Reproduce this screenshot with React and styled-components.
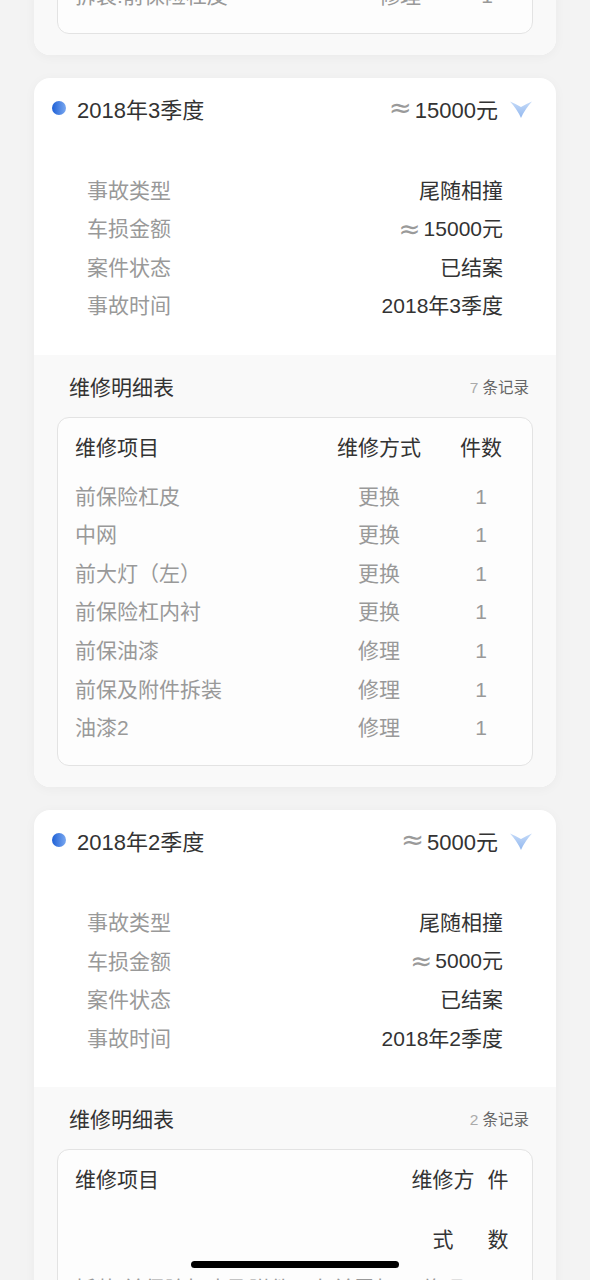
import React from "react";
import styled, { createGlobalStyle } from "styled-components";

const GlobalStyle = createGlobalStyle`
  body {
    margin: 0;
    background: #f3f3f3;
    font-family: "Liberation Sans", "Noto Sans CJK SC", sans-serif;
    color: #333;
  }
`;

const Page = styled.main`
  display: flex;
  flex-direction: column;
  gap: 23px;
  padding: 0 34px 40px;
  margin-top: -24px;
`;

const Card = styled.section`
  background: #fff;
  border-radius: 16px;
  overflow: hidden;
  box-shadow: 0 2px 12px rgba(0, 0, 0, 0.04);
`;

const CardHeader = styled.div`
  display: flex;
  align-items: center;
  height: 32px;
  padding: 14px 24px 0 18px;
`;

const Dot = styled.span`
  width: 14px;
  height: 14px;
  border-radius: 50%;
  background: linear-gradient(90deg, #1e60d6, #7aa8f0);
  flex-shrink: 0;
`;

const Title = styled.h2`
  margin: 0 0 0 11px;
  font-size: 22px;
  font-weight: 400;
  color: #333;
`;

const Amount = styled.div`
  margin-left: auto;
  font-size: 22px;
  color: #333;
  display: flex;
  align-items: center;
`;

const Approx = styled.span`
  font-family: "DejaVu Sans", sans-serif;
  font-size: 1.25em;
  line-height: 1;
  color: #9a9a9a;
  margin-right: 3px;
  vertical-align: -2px;
`;

const Chevron = styled.svg`
  width: 22px;
  height: 18px;
  margin-left: 12px;
  margin-top: 2px;
`;

const InfoList = styled.dl`
  margin: 0;
  padding: 46px 53px 31px;
`;

const InfoRow = styled.div`
  display: flex;
  justify-content: space-between;
  align-items: center;
  height: 38.5px;
  font-size: 21px;

  dt {
    color: #999;
  }

  dd {
    margin: 0;
    color: #333;
  }
`;

const RepairSection = styled.div`
  background: #f9f9f9;
  padding: ${({ continued }) => (continued ? "0 23px 21px" : "17px 23px 21px")};
`;

const SectionHead = styled.div`
  display: flex;
  justify-content: space-between;
  align-items: center;
  height: 28px;
  padding: 0 4px 0 12px;
  margin-bottom: 17px;
`;

const SectionTitle = styled.h3`
  margin: 0;
  font-size: 21px;
  font-weight: 400;
  color: #333;
`;

const Records = styled.span`
  font-size: 15.5px;
  color: #666;

  b {
    font-weight: 400;
    color: #aaa;
    margin-right: 4px;
  }
`;

const TableBox = styled.div`
  background: #fdfdfd;
  border: 1px solid #e3e3e3;
  border-radius: 12px;
  padding: 0 19px 17px 17px;
`;

const TRow = styled.div`
  display: grid;
  grid-template-columns: ${({ cols }) => cols};
  column-gap: 8px;
  font-size: 21px;
  line-height: ${({ head }) => (head ? "60px" : "38.6px")};
  color: ${({ head }) => (head ? "#333" : "#999")};

  span:not(:first-child) {
    text-align: center;
  }
`;

const HomeIndicator = styled.div`
  position: fixed;
  left: 50%;
  bottom: 12px;
  width: 208px;
  height: 7px;
  margin-left: -104px;
  border-radius: 4px;
  background: #000;
`;

const ChevronIcon = () => (
  <Chevron viewBox="0 0 22 18">
    <defs>
      <linearGradient id="chev" x1="0" y1="0" x2="0" y2="1">
        <stop offset="0" stopColor="#c4daf8" />
        <stop offset="1" stopColor="#93b8ef" />
      </linearGradient>
    </defs>
    <path d="M0 1.5 Q6 4 11 7 Q16 4 22 1.5 Q15 9 11 18 Q7 9 0 1.5 Z" fill="url(#chev)" />
  </Chevron>
);

const RepairTable = ({ cols, rows, showHead = true }) => (
  <TableBox>
    {showHead && (
      <TRow head cols={cols}>
        <span>维修项目</span>
        <span>维修方式</span>
        <span>件数</span>
      </TRow>
    )}
    {rows.map(([name, way, count], i) => (
      <TRow key={i} cols={cols}>
        <span>{name}</span>
        <span>{way}</span>
        <span>{count}</span>
      </TRow>
    ))}
  </TableBox>
);

const records = [
  {
    period: "2018年3季度",
    amount: "15000元",
    type: "尾随相撞",
    status: "已结案",
    cols: "1fr 124px 64px",
    rows: [
      ["前保险杠皮", "更换", 1],
      ["中网", "更换", 1],
      ["前大灯（左）", "更换", 1],
      ["前保险杠内衬", "更换", 1],
      ["前保油漆", "修理", 1],
      ["前保及附件拆装", "修理", 1],
      ["油漆2", "修理", 1],
    ],
  },
  {
    period: "2018年2季度",
    amount: "5000元",
    type: "尾随相撞",
    status: "已结案",
    cols: "1fr 64px 30px",
    rows: [
      ["拆装:前保险杠皮及附件、左前雾灯框架及饰条", "修理", 1],
      ["前保险杠皮修复及喷漆", "修理", 1],
    ],
  },
];

const RecordCard = ({ record }) => (
  <Card>
    <CardHeader>
      <Dot />
      <Title>{record.period}</Title>
      <Amount>
        <Approx>≈</Approx>
        {record.amount}
      </Amount>
      <ChevronIcon />
    </CardHeader>
    <InfoList>
      <InfoRow>
        <dt>事故类型</dt>
        <dd>{record.type}</dd>
      </InfoRow>
      <InfoRow>
        <dt>车损金额</dt>
        <dd>
          <Approx>≈</Approx>
          {record.amount}
        </dd>
      </InfoRow>
      <InfoRow>
        <dt>案件状态</dt>
        <dd>{record.status}</dd>
      </InfoRow>
      <InfoRow>
        <dt>事故时间</dt>
        <dd>{record.period}</dd>
      </InfoRow>
    </InfoList>
    <RepairSection>
      <SectionHead>
        <SectionTitle>维修明细表</SectionTitle>
        <Records>
          <b>{record.rows.length}</b>条记录
        </Records>
      </SectionHead>
      <RepairTable cols={record.cols} rows={record.rows} />
    </RepairSection>
  </Card>
);

export default function App() {
  return (
    <>
      <GlobalStyle />
      <Page>
        <Card>
          <RepairSection continued>
            <RepairTable showHead={false} cols="1fr 106px 52px" rows={[["拆装:前保险杠皮", "修理", 1]]} />
          </RepairSection>
        </Card>
        {records.map((r) => (
          <RecordCard key={r.period} record={r} />
        ))}
      </Page>
      <HomeIndicator />
    </>
  );
}
